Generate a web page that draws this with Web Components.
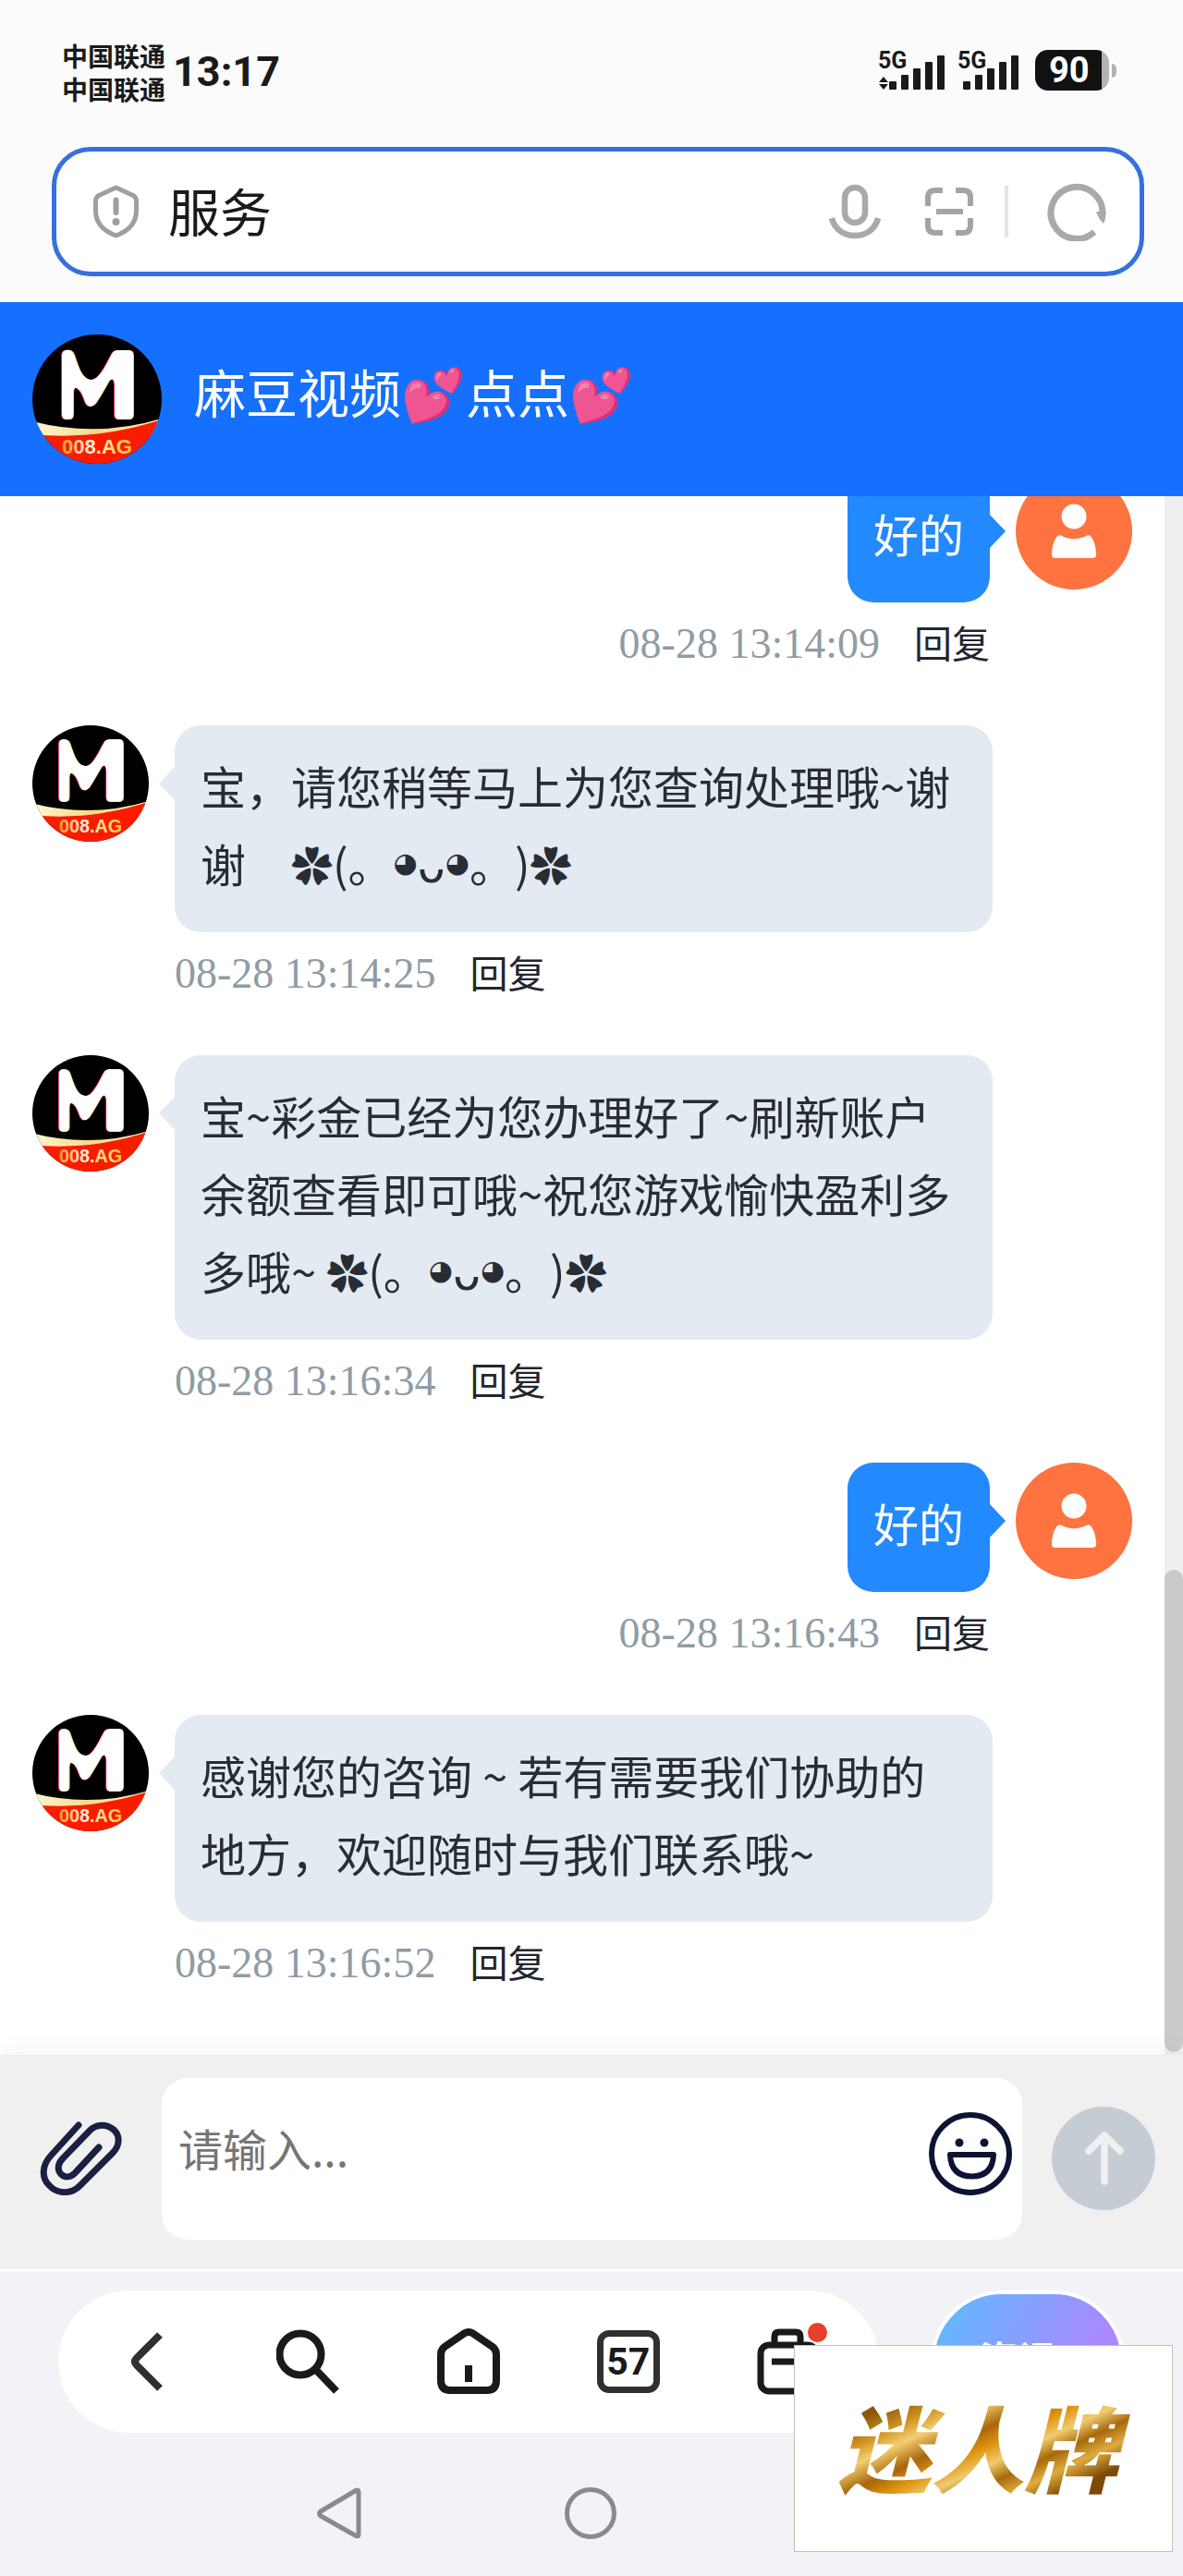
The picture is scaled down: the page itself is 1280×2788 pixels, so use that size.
<!DOCTYPE html>
<html lang="zh-CN">
<head>
<meta charset="utf-8">
<meta name="viewport" content="width=device-width, initial-scale=1">
<title>服务</title>
<style>
html, body { margin: 0; height: 100%; }
body { font-family: "Noto Sans CJK SC", "DejaVu Sans", sans-serif; color: #282d35; background: #fff; text-spacing-trim: space-all; }
</style>
</head>
<body>
<app-shell></app-shell>
<script>
const RESET = `*{box-sizing:border-box} button{border:0;padding:0;margin:0;background:none;font:inherit;color:inherit;display:block} svg{display:block}`;
function define(name, html) {
  const t = document.createElement('template');
  t.innerHTML = html.replace('<style>', '<style>' + RESET);
  customElements.define(name, class extends HTMLElement {
    constructor() {
      super();
      this.attachShadow({ mode: 'open' }).append(t.content.cloneNode(true));
    }
  });
}

define('signal-bars', `<style>
:host{display:flex;align-items:flex-start}
.g{display:flex;flex-direction:column;justify-content:space-between;height:53px;width:12px;font:700 25px/24px Roboto,sans-serif;white-space:nowrap}
:host([idle]) .g{width:6px}
</style>
<div class="g"><span>5G</span><slot></slot></div>
<svg width="60" height="53" viewBox="0 0 60 53" fill="#1a1a1a"><rect x="0" y="34" width="8" height="9" rx="1"/><rect x="13" y="27" width="8" height="16" rx="1"/><rect x="26" y="20" width="8" height="23" rx="1"/><rect x="39" y="13" width="8" height="30" rx="1"/><rect x="52" y="6" width="8" height="37" rx="1"/></svg>`);

define('status-bar', `<style>
:host{display:flex;justify-content:space-between;padding:42px 72px 0 67px;height:159px;color:#1a1a1a}
.l,.r{display:flex}
.l{gap:8px}
.c{font-weight:700;font-size:28px;line-height:36px}
time{font:700 45px/72px Roboto,sans-serif}
.r{padding-top:12px;align-items:flex-start;gap:18px}
.s{display:flex;gap:14px}
.b{display:flex;align-items:center;gap:3px}
.p{width:80px;height:44px;border-radius:14px;background:linear-gradient(90deg,#111 72px,#b3b3b3 72px);color:#fff;font:700 38px/44px Roboto,sans-serif;padding-left:15px}
.t{width:5px;height:15px;border-radius:0 5px 5px 0;background:#b3b3b3}
</style>
<div class="l"><div class="c"><div>中国联通</div><div>中国联通</div></div><time>13:17</time></div>
<div class="r"><div class="s">
<signal-bars><svg width="12" height="24" viewBox="0 0 12 24" fill="#1a1a1a"><path d="M6 0l5 6H1zM6 14l5-6H1z"/></svg></signal-bars>
<signal-bars idle></signal-bars></div>
<div class="b"><div class="p">90</div><div class="t"></div></div></div>`);

define('address-bar', `<style>
:host{display:block;padding:0 42px 28px 56px}
.box{height:140px;border:5px solid #3670e0;border-radius:42px;background:#fff;display:flex;align-items:center;padding:0 36px 0 40px}
input{flex:1;min-width:0;border:0;outline:0;background:none;font:400 56px/80px "Noto Sans CJK SC",sans-serif;color:#1a1a1a;padding:0 0 4px;margin:0 20px 0 32px}
.i{display:flex;align-items:center}
.d{width:4px;height:56px;background:#e4e4e4;margin:0 42px 0 34px}
.m{margin-right:48px}
</style>
<div class="box">
<svg width="49" height="58" viewBox="0 0 49 58" fill="none" stroke="#9f9f9f" stroke-width="5"><path d="M24.500 3L43 11.500Q46.500 13.500 46.500 17.500V28C46.500 41 38 50 24.500 55C11 50 2.500 41 2.500 28V17.500Q2.500 13.500 6 11.500Z" stroke-linejoin="round"/><path d="M24.500 16.500V30" stroke-width="6" stroke-linecap="round"/><circle cx="24.500" cy="40" r="4" fill="#9f9f9f" stroke="none"/></svg>
<input type="text" value="服务" aria-label="网址">
<div class="i">
<button class="m" aria-label="语音"><svg width="56" height="60" viewBox="0 0 56 60" fill="none" stroke="#a9a9a9" stroke-width="6.500"><rect x="17" y="4" width="22" height="38" rx="11"/><path d="M3 37C6 49 16 56 28 56S50 49 53 37"/></svg></button>
<button aria-label="扫码"><svg width="52" height="52" viewBox="0 0 52 52" fill="none" stroke="#a4a4a4" stroke-width="6"><path d="M3 20V11Q3 3 11 3H19M33 3H41Q49 3 49 11V20M49 33V41Q49 49 41 49H33M19 49H11Q3 49 3 41V33M12 26H41"/></svg></button>
<div class="d"></div>
<button aria-label="刷新"><svg width="64" height="64" viewBox="0 0 64 64"><path d="M51 54A28 28 0 1 1 60 34" fill="none" stroke="#a9a9a9" stroke-width="7"/><path d="M53 32H63.500Q64 39 61 45Q55 39 53 32Z" fill="#a9a9a9"/></svg></button>
</div></div>`);

define('brand-avatar', `<style>
:host{display:block;flex:none;width:126px;height:126px}
svg{width:100%;height:100%}
text{font:700 22px "Liberation Sans",sans-serif}
</style>
<svg viewBox="0 0 140 140" role="img" aria-label="M 008.AG">
<defs><clipPath id="c"><circle cx="70" cy="70" r="70"/></clipPath>
<path id="m" d="M36 17Q43 16 45 22C50 36 53 48 63 49C72 50 79 34 86 21Q88 17 93 17H104Q109 17 109 23V86Q109 92 104 92H94Q89 92 89 86V54Q88 45 83 50C77 60 73 68 68 75Q62 81 58 75C54 65 53 61 48 58Q44 56 44 64V86Q44 92 39 92H37Q32 92 32 86V23Q32 18 36 17Z"/>
<linearGradient id="g"><stop offset="0" stop-color="#fff6cf"/><stop offset=".5" stop-color="#f5d98a"/><stop offset="1" stop-color="#fff3c0"/></linearGradient>
<linearGradient id="t"><stop offset="0" stop-color="#f79a2e"/><stop offset=".4" stop-color="#fff0e0"/><stop offset=".6" stop-color="#ffe9a0"/><stop offset="1" stop-color="#f9c440"/></linearGradient></defs>
<g clip-path="url(#c)"><path d="M0 0H140V140H0Z" fill="#000"/>
<path d="M0 94Q70 112 140 91V110L0 112Z" fill="url(#g)"/>
<path d="M0 108Q70 115 140 92V140H0Z" fill="#fb1c00"/>
<use href="#m" x="-1" fill="#ee1f5f"/><use href="#m" x="1" fill="#f6cf60"/><use href="#m" fill="#fff"/>
<text x="70" y="129" text-anchor="middle" fill="url(#t)">008.AG</text></g></svg>`);

define('user-avatar', `<style>:host{display:block;flex:none;width:126px;height:126px}</style>
<svg width="126" height="126" viewBox="0 0 126 126" role="img" aria-label="用户"><circle cx="63" cy="63" r="63" fill="#fe733f"/><circle cx="63" cy="47" r="13.500" fill="#fff"/><path d="M49 67.500Q63 75 77 67.500Q80 66.500 82 69.500Q87 77 87 89Q87 92 83 92H43Q39 92 39 89Q39 77 44 69.500Q46 66.500 49 67.500Z" fill="#fff"/></svg>`);

define('chat-header', `<style>
:host{display:flex;align-items:center;gap:35px;height:210px;padding:0 35px;background:#1570ff;color:#fff}
brand-avatar{width:140px;height:140px}
h1{margin:0;font-weight:400;font-size:56px;line-height:84px;padding-bottom:18px}
</style><brand-avatar></brand-avatar><h1><slot></slot></h1>`);

define('chat-message', `<style>
:host{display:flex;gap:28px;--b:#e3eaf1;align-items:flex-start}
.col{flex:1;min-width:0;display:flex;flex-direction:column;align-items:flex-start;margin-right:151px}
.bubble{position:relative;background:var(--b);border-radius:28px;padding:23px 28px 33px;font-size:49px;line-height:84px}
.bubble::before{content:"";position:absolute;top:45px;right:100%;border:18px solid transparent;border-left-width:0;border-right:17px solid var(--b)}
.meta{display:flex;align-items:center;gap:37px;height:88px;margin-bottom:45px}
.time{font:400 46px/60px "Liberation Serif",serif;color:#8f9ca5;padding-top:2px}
.reply{font-size:41px;line-height:60px;color:#22262e;padding-bottom:4px}
user-avatar{display:none}
:host([mine]){--b:#2289ff}
:host([mine]) .col{margin:0;align-items:flex-end}
:host([mine]) .bubble{color:#fff}
:host([mine]) .bubble::before{right:auto;left:100%;border:18px solid transparent;border-right-width:0;border-left:17px solid var(--b)}
:host([mine]) brand-avatar{display:none}
:host([mine]) user-avatar{display:block}
</style><brand-avatar></brand-avatar>
<div class="col"><div class="bubble"><slot></slot></div>
<div class="meta"><span class="time"><slot name="time"></slot></span><button class="reply">回复</button></div></div>
<user-avatar></user-avatar>`);

define('flower-face', `<style>
:host{display:inline-flex;align-items:baseline;white-space:pre;height:84px;vertical-align:top}
.f{font-size:45px}
.e{font-size:30px;padding-bottom:6px;align-self:center;line-height:36px}
</style><span><slot></slot></span><span class="f">✿</span><span>(。</span><span class="e">◕</span><span>ᴗ</span><span class="e">◕</span><span>。)</span><span class="f">✿</span>`);

define('chat-log', `<style>
:host{display:flex;background:#fff}
.list{flex:1;min-width:0;overflow:hidden;display:flex;flex-direction:column;justify-content:flex-end;padding:0 35px 11px}
::slotted(*){flex:none}
.bar{width:20px;background:#efefef;display:flex;flex-direction:column;justify-content:flex-end;padding-bottom:3px}
.thumb{height:31%;border-radius:10px;background:#cacaca}
</style><div class="list"><slot></slot></div><div class="bar"><div class="thumb"></div></div>`);

define('chat-composer', `<style>
:host{display:flex;align-items:center;height:234px;padding:0 30px 8px 43px;background:#f0f0f0;border-bottom:2px solid #fff;box-shadow:0 0 30px rgba(0,0,0,.06)}
.box{flex:1;min-width:0;height:175px;margin:0 32px 0 43px;border-radius:28px;background:#fff;display:flex;align-items:center;padding:0 11px 10px 18px}
input{flex:1;min-width:0;border:0;outline:0;padding:0 0 14px;background:none;font:400 48px/80px "Noto Sans CJK SC",sans-serif;color:#282d35}
input::placeholder{color:#757575;opacity:1}
</style>
<button aria-label="附件"><svg width="89" height="80" viewBox="0 0 89 80" fill="none" stroke="#1a2040" stroke-width="7" stroke-linecap="round"><path d="M42 4L12 37C2 48 2 61 10 69C19 79 34 79 43 70L79 34C87 26 87 15 80 9C72 2 61 3 54 10L25 40C19 46 19 53 23 57C27 61 33 61 38 56L64 28"/></svg></button>
<div class="box"><input type="text" placeholder="请输入..." aria-label="请输入">
<button aria-label="表情"><svg width="90" height="90" viewBox="0 0 90 90" fill="none" stroke="#0c1433" stroke-width="6"><circle cx="45" cy="45" r="42"/><circle cx="33" cy="33" r="4.500" fill="#0c1433" stroke="none"/><circle cx="60" cy="33" r="4.500" fill="#0c1433" stroke="none"/><path d="M23 46H70Q69 69.500 46.500 69.500Q24 69.500 23 46Z" stroke-linejoin="round"/></svg></button></div>
<button aria-label="发送"><svg width="112" height="112" viewBox="0 0 112 112"><circle cx="56" cy="56" r="56" fill="#c5ccd4"/><path d="M57 81V32M40 48L57 31L74 48" fill="none" stroke="#f0f0f0" stroke-width="7.500" stroke-linecap="round" stroke-linejoin="round"/></svg></button>`);

define('browser-nav', `<style>
:host{display:block;background:#f1f3f7;height:330px;padding:21px 63px 0}
.row{display:flex;gap:56px}
nav{flex:1;min-width:0;height:154px;border-radius:77px;background:#fff;display:flex;align-items:center;justify-content:space-between;padding:0 64px 0 63px}
.n{width:68px;height:68px;border:7px solid #303030;border-radius:13px;font:700 41px/54px Roboto,sans-serif;color:#1a1a1a;text-align:center}
.w{position:relative}
.w i{position:absolute;left:55px;top:-6px;width:21px;height:21px;border-radius:50%;background:#e8402a}
.ai{width:210px;height:154px;border-radius:77px;border:4px solid #fff;background:linear-gradient(120deg,#68b4ff 12%,#b184ff 80%);color:#fff;font-size:42px;font-weight:700;line-height:60px;padding:0 20px 8px 0}
.sys{display:flex;gap:220px;padding:59px 0 0 280px}
</style>
<div class="row"><nav>
<button aria-label="返回"><svg width="68" height="72" viewBox="0 0 68 72" fill="none" stroke="#303030" stroke-width="8"><path d="M47 7L22 32Q18 36 22 40L47 65" stroke-linejoin="round"/></svg></button>
<button aria-label="搜索"><svg width="68" height="72" viewBox="0 0 68 72" fill="none" stroke="#1a1a1a" stroke-width="8"><circle cx="26" cy="28" r="22.500"/><path d="M42 44L65 68"/></svg></button>
<button aria-label="主页"><svg width="68" height="72" viewBox="0 0 68 72" fill="none" stroke="#1a1a1a" stroke-width="8"><path d="M30 5Q34 3 38 5L60 20Q64 23 64 28V56Q64 67 54 67H14Q4 67 4 56V28Q4 23 8 20Z"/><path d="M34 40V58"/></svg></button>
<button class="n" aria-label="标签页 57">57</button>
<button class="w" aria-label="工具箱"><svg width="68" height="72" viewBox="0 0 68 72" fill="none" stroke="#1a1a1a" stroke-width="7"><rect x="4" y="18" width="60" height="50" rx="9"/><path d="M19 18V9Q19 4 24 4H42Q47 4 47 9V18M16 36H52"/></svg><i></i></button>
</nav><button class="ai">资讯</button></div>
<div class="sys">
<button aria-label="系统返回"><svg width="48" height="56" viewBox="0 0 48 56" fill="none" stroke="#888a8c" stroke-width="5" stroke-linejoin="round"><path d="M4 26Q1 28.500 4 31L42 52.500Q45 54 45 51V5Q45 2 42 3.500Z"/></svg></button>
<button aria-label="系统主页"><svg width="56" height="56" viewBox="0 0 56 56" fill="none" stroke="#888a8c" stroke-width="5"><circle cx="28" cy="28" r="25.500"/></svg></button></div>`);

define('brand-stamp', `<style>
:host{position:fixed;right:11px;bottom:26px;width:410px;height:224px;display:grid;place-items:center;background:#fff;border:1px solid #bfbfbf}
span{font-size:101px;font-weight:900;font-style:italic;line-height:130px;padding:0 24px 8px 12px;color:transparent;background:linear-gradient(155deg,#8a560c 18%,#d0921f 27%,#f3cf70 34%,#a9660c 43%,#e0940f 50%,#f0cb70 57%,#a66a0b 64%,#e0ab3e 71%,#7d4a06 80%);-webkit-background-clip:text;background-clip:text}
</style><span><slot></slot></span>`);

define('app-shell', `<style>
:host{display:flex;flex-direction:column;height:100vh;background:#fbfbfb}
:host>*{flex:none}
:host>chat-log{flex:1;min-height:0}
</style>
<status-bar></status-bar>
<address-bar></address-bar>
<chat-header>麻豆视频💕点点💕</chat-header>
<chat-log>
<chat-message mine>好的<span slot="time">08-28 13:14:09</span></chat-message>
<chat-message>宝，请您稍等马上为您查询处理哦~谢<flower-face>谢　</flower-face><span slot="time">08-28 13:14:25</span></chat-message>
<chat-message>宝~彩金已经为您办理好了~刷新账户余额查看即可哦~祝您游戏愉快盈利多<flower-face>多哦~ </flower-face><span slot="time">08-28 13:16:34</span></chat-message>
<chat-message mine>好的<span slot="time">08-28 13:16:43</span></chat-message>
<chat-message>感谢您的咨询 ~ 若有需要我们协助的地方，欢迎随时与我们联系哦~<span slot="time">08-28 13:16:52</span></chat-message>
</chat-log>
<chat-composer></chat-composer>
<browser-nav></browser-nav>
<brand-stamp>迷人牌</brand-stamp>`);
</script>
</body>
</html>
